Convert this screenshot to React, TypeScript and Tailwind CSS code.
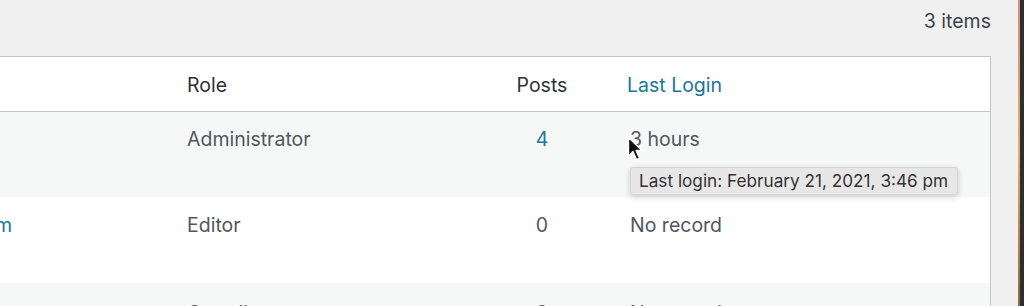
export default function App() {
  const font = { fontFamily: "Inter, 'Liberation Sans', sans-serif" };
  return (
    <div className="flex h-[306px] w-[1024px] overflow-hidden bg-[#f0f0f1] text-[#3c434a]" style={font}>
      <div className="relative flex-1">
        {/* Top nav */}
        <div className="flex h-[56px] justify-end pr-[27px] pt-[7px] text-[19.5px] text-[#3c434a]">3 items</div>

        {/* Table */}
        <div className="w-[991px] border-r border-t border-[#c3c4c7] bg-white">
          <div className="grid h-[55px] grid-cols-[176px_312px_108px_1fr] items-center border-b border-[#c3c4c7] pt-[4px] text-[19.5px]">
            <div />
            <div className="pl-[11px] text-[#2c3338]">Role</div>
            <div className="text-center text-[#2c3338]">Posts</div>
            <div className="pl-[31px] text-[#21759b]">Last Login</div>
          </div>

          <div className="grid h-[85px] grid-cols-[176px_312px_108px_1fr] bg-[#f6f7f7] pt-[15px] text-[19.5px] leading-[24px]">
            <div />
            <div className="pl-[11px] text-[#50575e]">Administrator</div>
            <div className="text-center text-[#21759b]">4</div>
            <div className="pl-[34px] text-[#50575e]">3 hours</div>
          </div>

          <div className="grid h-[86px] grid-cols-[176px_312px_108px_1fr] pt-[16px] text-[19.5px] leading-[24px]">
            <div className="-ml-[5px] text-[#21759b]">m</div>
            <div className="pl-[11px] text-[#50575e]">Editor</div>
            <div className="text-center text-[#50575e]">0</div>
            <div className="pl-[34px] text-[#50575e]">No record</div>
          </div>

          <div className="grid h-[60px] grid-cols-[176px_312px_108px_1fr] bg-[#f6f7f7] pt-[18px] text-[19.5px] leading-[24px]">
            <div />
            <div className="pl-[11px] text-[#50575e]">Contributor</div>
            <div className="text-center text-[#50575e]">0</div>
            <div className="pl-[34px] text-[#50575e]">No record</div>
          </div>
        </div>

        {/* Tooltip */}
        <div className="absolute left-[630px] top-[167px] flex h-[28px] w-[328px] items-center rounded-[3px] border border-[#d6d5d6] bg-[#e8e7e8] pl-[8px] text-[17.2px] text-[#333] shadow-[0_2px_6px_rgba(0,0,0,0.18)]">
          Last login: February 21, 2021, 3:46 pm
        </div>

        {/* Cursor */}
        <svg className="absolute left-[627px] top-[136px]" width="16" height="26" viewBox="0 0 16 26">
          <path d="M1.5 1.5 L1.5 20 L6 15.5 L9.5 23.5 L12.5 22.3 L9 14.5 L15 14.5 Z" fill="#111" stroke="#fff" strokeWidth="1.3" strokeLinejoin="round" />
        </svg>
      </div>

      {/* Window edge */}
      <div className="flex w-[6px]">
        <div className="w-[2px] bg-gradient-to-b from-[#d98a7a] via-[#e0b060] to-[#8a6a40]" />
        <div className="flex-1 bg-[#2e2e2e]" />
      </div>
    </div>
  );
}
